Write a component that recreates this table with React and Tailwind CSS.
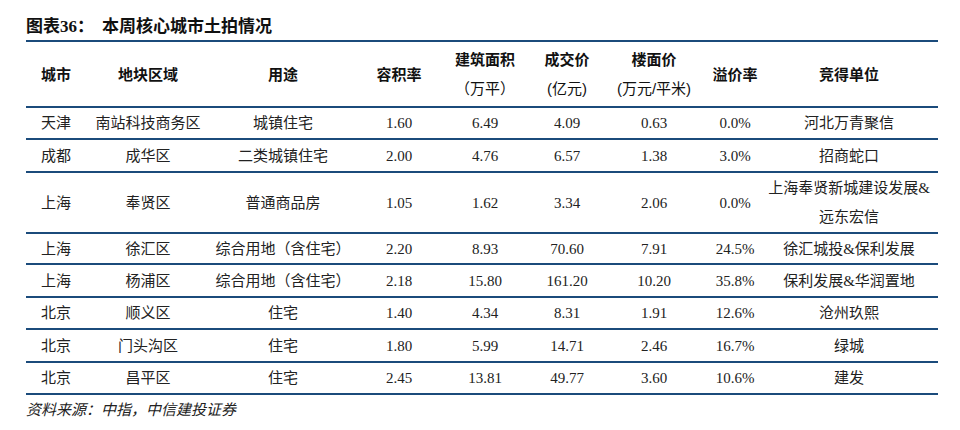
import React from "react";

const W = ["w-[60px]", "w-[124px]", "w-[146px]", "w-[86px]", "w-[86px]", "w-[78px]", "w-[96px]", "w-[66px]", "w-[162px]"];

const rows = [
  { h: "h-[32px]", c: ["天津", "南站科技商务区", "城镇住宅", "1.60", "6.49", "4.09", "0.63", "0.0%", "河北万青聚信"] },
  { h: "h-[33px]", c: ["成都", "成华区", "二类城镇住宅", "2.00", "4.76", "6.57", "1.38", "3.0%", "招商蛇口"] },
  { h: "h-[61px]", c: ["上海", "奉贤区", "普通商品房", "1.05", "1.62", "3.34", "2.06", "0.0%", ["上海奉贤新城建设发展&", "远东宏信"]] },
  { h: "h-[31px]", c: ["上海", "徐汇区", "综合用地（含住宅）", "2.20", "8.93", "70.60", "7.91", "24.5%", "徐汇城投&保利发展"] },
  { h: "h-[33px]", c: ["上海", "杨浦区", "综合用地（含住宅）", "2.18", "15.80", "161.20", "10.20", "35.8%", "保利发展&华润置地"] },
  { h: "h-[32px]", c: ["北京", "顺义区", "住宅", "1.40", "4.34", "8.31", "1.91", "12.6%", "沧州玖熙"] },
  { h: "h-[33px]", c: ["北京", "门头沟区", "住宅", "1.80", "5.99", "14.71", "2.46", "16.7%", "绿城"] },
  { h: "h-[32px]", c: ["北京", "昌平区", "住宅", "2.45", "13.81", "49.77", "3.60", "10.6%", "建发"] },
];

const headers = [
  ["城市"],
  ["地块区域"],
  ["用途"],
  ["容积率"],
  ["建筑面积", "（万平）"],
  ["成交价", "(亿元)"],
  ["楼面价", "(万元/平米)"],
  ["溢价率"],
  ["竞得单位"],
];

export default function App() {
  return (
    <div className="w-[960px] h-[430px] bg-white pt-[12px] px-[26px] overflow-hidden">
      <div
        className="h-[26px] leading-[26px] text-[17px] font-bold text-[#111] mb-[2px] whitespace-nowrap"
        style={{ fontFamily: '"Liberation Serif", "Noto Sans CJK SC", serif' }}
      >
        <span>图表36：</span>
        <span className="ml-[8px]" style={{ fontFamily: '"Noto Sans CJK SC", sans-serif' }}>本周核心城市土拍情况</span>
      </div>
      <div className="w-[912px]">
        <div
          className="flex h-[68px] border-t-2 border-b-2 border-[#1b4b7b] text-[15px] text-[#111]"
          style={{ fontFamily: '"Liberation Sans", "Noto Sans CJK SC", sans-serif' }}
        >
          {headers.map((h, i) => (
            <div key={i} className={`${W[i]} shrink-0 flex flex-col items-center justify-center whitespace-nowrap`}>
              <div className="leading-[29px] font-bold">{h[0]}</div>
              {h[1] && <div className="leading-[29px] font-normal">{h[1]}</div>}
            </div>
          ))}
        </div>
        {rows.map((r, ri) => (
          <div
            key={ri}
            className={`flex ${r.h} border-b-2 border-[#1b4b7b] text-[15px] text-[#222]`}
            style={{ fontFamily: '"Liberation Serif", "Noto Sans CJK SC", serif' }}
          >
            {r.c.map((t, i) => (
              <div key={i} className={`${W[i]} shrink-0 flex flex-col items-center justify-center whitespace-nowrap`}>
                {Array.isArray(t) ? (
                  t.map((l, k) => (
                    <div key={k} className="leading-[29px]">{l}</div>
                  ))
                ) : (
                  <div className="leading-[20px]">{t}</div>
                )}
              </div>
            ))}
          </div>
        ))}
        <div
          className="h-[30px] leading-[30px] text-[15px] italic text-[#222]"
          style={{ fontFamily: '"Liberation Serif", "Noto Sans CJK SC", serif' }}
        >
          资料来源：中指，中信建投证券
        </div>
      </div>
    </div>
  );
}
